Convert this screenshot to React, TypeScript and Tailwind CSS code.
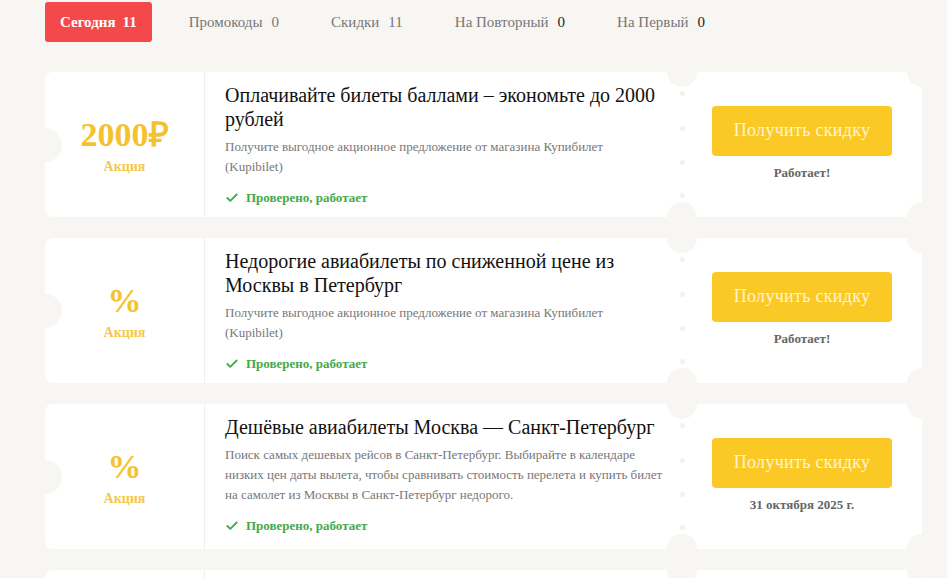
import { Check } from 'lucide-react'

type Deal = {
  value: string
  title: string
  text: string
  note: string
}

const deals: Deal[] = [
  {
    value: '2000₽',
    title: 'Оплачивайте билеты баллами – экономьте до 2000 рублей',
    text: 'Получите выгодное акционное предложение от магазина Купибилет (Kupibilet)',
    note: 'Работает!',
  },
  {
    value: '%',
    title: 'Недорогие авиабилеты по сниженной цене из Москвы в Петербург',
    text: 'Получите выгодное акционное предложение от магазина Купибилет (Kupibilet)',
    note: 'Работает!',
  },
  {
    value: '%',
    title: 'Дешёвые авиабилеты Москва — Санкт-Петербург',
    text: 'Поиск самых дешевых рейсов в Санкт-Петербург. Выбирайте в календаре низких цен даты вылета, чтобы сравнивать стоимость перелета и купить билет на самолет из Москвы в Санкт-Петербург недорого.',
    note: '31 октября 2025 г.',
  },
  {
    value: '%',
    title: 'Авиабилеты со скидкой',
    text: 'Получите выгодное акционное предложение от магазина Купибилет (Kupibilet)',
    note: 'Работает!',
  },
]

const tabs = [
  { label: 'Промокоды', count: '0', dark: false },
  { label: 'Скидки', count: '11', dark: false },
  { label: 'На Повторный', count: '0', dark: true },
  { label: 'На Первый', count: '0', dark: true },
]

function DealCard({ deal }: { deal: Deal }) {
  return (
    <div className="relative flex h-[145px] w-[877px] shrink-0 overflow-hidden rounded-[8px] bg-white">
      <div className="flex w-[160px] flex-col items-center justify-center border-r border-[#efefef] pt-[4px]">
        <div className="text-[34px] font-bold leading-[36px] text-[#f5c22f]">{deal.value}</div>
        <div className="mt-[5px] text-[14px] font-bold leading-[18px] text-[#f2c94f]">Акция</div>
      </div>

      <div className="flex w-[477px] flex-col pl-[20px] pr-[19px] pt-[11px]">
        <h3 className="text-[20px] leading-[24px] text-[#111]">{deal.title}</h3>
        <p className="mt-[6px] text-[13px] leading-[20px] text-[#777]">{deal.text}</p>
        <div className="mt-[11px] flex items-center gap-[7px] text-[13px] font-bold leading-[20px] text-[#45a94b]">
          <Check size={14} strokeWidth={3.2} className="text-[#3dae49]" />
          Проверено, работает
        </div>
      </div>

      <div className="flex w-[240px] flex-col items-center justify-center pb-[2px]">
        <button className="h-[50px] w-[180px] rounded-[4px] bg-[#fbc926] text-[18px] tracking-[0.3px] text-[#fff4cf]">
          Получить скидку
        </button>
        <div className="mt-[8px] text-[13px] font-bold leading-[18px] text-[#666]">{deal.note}</div>
      </div>

      {/* ticket notches */}
      <span className="absolute left-[-17px] top-[56px] h-[34px] w-[34px] rounded-full bg-[#f8f6f2]" />
      <span className="absolute left-[622px] top-[-15px] h-[30px] w-[30px] rounded-full bg-[#f8f6f2]" />
      <span className="absolute bottom-[-15px] left-[622px] h-[30px] w-[30px] rounded-full bg-[#f8f6f2]" />
      <span className="absolute left-[862px] top-[-15px] h-[30px] w-[30px] rounded-full bg-[#f8f6f2]" />
      <span className="absolute bottom-[-15px] left-[862px] h-[30px] w-[30px] rounded-full bg-[#f8f6f2]" />
      <span className="absolute left-[635px] top-[19px] h-[5px] w-[5px] rounded-full bg-[#f3f1ed]" />
      <span className="absolute left-[635px] top-[54px] h-[5px] w-[5px] rounded-full bg-[#f3f1ed]" />
      <span className="absolute left-[635px] top-[88px] h-[5px] w-[5px] rounded-full bg-[#f3f1ed]" />
      <span className="absolute left-[635px] top-[121px] h-[5px] w-[5px] rounded-full bg-[#f3f1ed]" />
    </div>
  )
}

export default function App() {
  return (
    <div className="h-[578px] w-[947px] overflow-hidden bg-[#f8f6f2] pl-[45px] pt-[2px] font-['Liberation_Serif',serif]">
      <div className="flex items-center gap-[22px]">
        <div className="flex h-[40px] items-center gap-[7px] rounded-[3px] bg-[#f5484a] px-[15px] text-[15px] font-bold text-white">
          <span>Сегодня</span>
          <span>11</span>
        </div>
        {tabs.map((t) => (
          <div key={t.label} className="flex h-[40px] items-center gap-[9px] px-[15px] text-[15px] text-[#777]">
            <span>{t.label}</span>
            <span className={t.dark ? 'text-[#222]' : 'text-[#777]'}>{t.count}</span>
          </div>
        ))}
      </div>

      <div className="mt-[30px] flex flex-col gap-[21px]">
        {deals.map((d, i) => (
          <DealCard key={i} deal={d} />
        ))}
      </div>
    </div>
  )
}
